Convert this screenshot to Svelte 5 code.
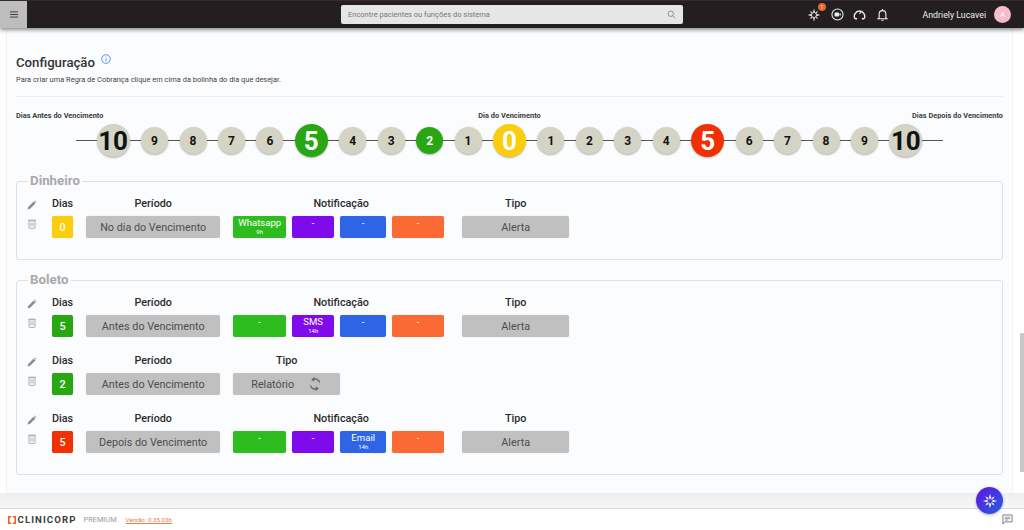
<script>
	const before = [10, 9, 8, 7, 6, 5, 4, 3, 2, 1];
	const after = [1, 2, 3, 4, 5, 6, 7, 8, 9, 10];
	const ball = (n, tone) => ({
		n,
		big: n === 10 || n === 5 || n === 0,
		tone
	});
	const days = [
		...before.map((n) => ball(n, n === 5 || n === 2 ? "green" : "plain")),
		ball(0, "yellow"),
		...after.map((n) => ball(n, n === 5 ? "red" : "plain"))
	];

	const notif = (wa, sms, email, other) => [
		{ cls: "wa", label: wa ? "Whatsapp" : "-", hour: wa },
		{ cls: "sms", label: sms ? "SMS" : "-", hour: sms },
		{ cls: "mail", label: email ? "Email" : "-", hour: email },
		{ cls: "other", label: "-", hour: other }
	];

	const groups = [
		{
			name: "Dinheiro",
			rules: [{ day: 0, tone: "yellow", period: "No dia do Vencimento", items: notif("9h") }]
		},
		{
			name: "Boleto",
			rules: [
				{ day: 5, tone: "green", period: "Antes do Vencimento", items: notif("", "14h") },
				{ day: 2, tone: "green", period: "Antes do Vencimento", report: true },
				{ day: 5, tone: "red", period: "Depois do Vencimento", items: notif("", "", "14h") }
			]
		}
	];
</script>

{#snippet spark(size, color)}
	<svg width={size} height={size} viewBox="0 0 24 24" fill={color}>
		<path d="M12 1l1.6 6.2L12 9.6l-1.6-2.4zM12 23l-1.6-6.2 1.6-2.4 1.6 2.4zM1 12l6.2-1.6L9.6 12l-2.4 1.6zM23 12l-6.2 1.6-2.4-1.6 2.4-1.6z" />
		<path d="M5 5l4.5 2.2.6 2.9-2.9-.6zM19 19l-4.5-2.2-.6-2.9 2.9.6z" opacity="0.85" />
		<path d="M19 5l-2.2 4.5-2.9.6.6-2.9zM5 19l2.2-4.5 2.9-.6-.6 2.9z" opacity="0.85" />
	</svg>
{/snippet}

<div class="page">
	<header class="topbar">
		<button class="menu" aria-label="Menu">
			<svg width="8" height="7" viewBox="0 0 8 7" fill="#444">
				<rect y="0.4" width="8" height="1" />
				<rect y="3" width="8" height="1" />
				<rect y="5.6" width="8" height="1" />
			</svg>
		</button>
		<div class="search">
			<span>Encontre pacientes ou funções do sistema</span>
			<svg width="9" height="9" viewBox="0 0 12 12" fill="none" stroke="#8a8a8a" stroke-width="1.3">
				<circle cx="5" cy="5" r="3.6" />
				<path d="M7.7 7.7L11 11" />
			</svg>
		</div>
		<div class="actions">
			<div class="spark">
				{@render spark(14, "#fff")}
				<span class="badge">1</span>
			</div>
			<svg width="13" height="13" viewBox="0 0 14 14" fill="none" stroke="#eee" stroke-width="1.1">
				<circle cx="7" cy="7" r="6" />
				<rect x="3.8" y="4.8" width="5" height="4.4" rx="1" fill="#eee" stroke="none" />
				<path d="M8.6 7l2-1.4v2.8z" fill="#eee" stroke="none" />
			</svg>
			<svg width="13" height="13" viewBox="0 0 14 14" fill="none" stroke="#eee" stroke-width="1.5">
				<path d="M2 11.4a5.6 5.6 0 1 1 10 0" />
				<path d="M2 11.6h2.4M9.6 11.6H12" />
				<path d="M7 6.4l1.8-2.4" stroke-width="1.2" />
			</svg>
			<svg width="13" height="14" viewBox="0 0 14 15" fill="none" stroke="#eee" stroke-width="1.2">
				<path d="M3.4 10.6V6.4a3.6 3.6 0 0 1 7.2 0v4.2l1.2 1H2.2z" />
				<path d="M5.8 13.2h2.4M7 1v1" />
			</svg>
		</div>
		<span class="user">Andriely Lucavei</span>
		<span class="avatar">A</span>
	</header>

	<main class="card">
		<h1>Configuração
			<svg width="10" height="10" viewBox="0 0 10 10" fill="none" stroke="#4a8fd6" stroke-width="0.9">
				<circle cx="5" cy="5" r="4.3" />
				<path d="M5 4.4v2.8M5 2.6v.9" />
			</svg>
		</h1>
		<p class="hint">Para criar uma Regra de Cobrança clique em cima da bolinha do dia que desejar.</p>

		<div class="legend">
			<span>Dias Antes do Vencimento</span>
			<span>Dia do Vencimento</span>
			<span>Dias Depois do Vencimento</span>
		</div>

		<div class="track">
			{#each days as d}
				<span class="ball {d.tone}" class:big={d.big}>{d.n}</span>
			{/each}
		</div>

		{#each groups as g}
			<fieldset>
				<legend>{g.name}</legend>
				{#each g.rules as r}
					<div class="rule">
						<div class="tools">
							<svg width="10" height="10" viewBox="0 0 10 10" fill="#8d8d8d">
								<path d="M0.6 9.4l.6-2.5L6.6 1.5l1.9 1.9-5.4 5.4zM7.2.9l.6-.5 1.8 1.8-.5.6z" />
							</svg>
							<svg width="8" height="10" viewBox="0 0 8 10" fill="none" stroke="#9a9a9a" stroke-width="0.8">
								<rect x="1" y="1.8" width="6" height="7.6" rx="0.6" />
								<path d="M0 1.2h8M3 3.5v4M5 3.5v4" />
							</svg>
						</div>
						<div class="col">
							<strong>Dias</strong>
							<span class="chip day {r.tone}">{r.day}</span>
						</div>
						<div class="col">
							<strong>Período</strong>
							<span class="chip period">{r.period}</span>
						</div>
						{#if r.report}
							<div class="col">
								<strong>Tipo</strong>
								<span class="chip type report">
									Relatório
									<svg width="14" height="14" viewBox="0 0 14 14" fill="none" stroke="#666" stroke-width="1.3">
										<path d="M11.6 5.6a4.8 4.8 0 0 0-6.8-3.3" />
										<path d="M2.4 8.4a4.8 4.8 0 0 0 6.8 3.3" />
										<path d="M6.6 0L3.2 2.4l3 2.4zM7.4 14l3.4-2.4-3-2.4z" fill="#666" stroke="none" />
									</svg>
								</span>
							</div>
						{:else}
							<div class="col">
								<strong class="notif-title">Notificação</strong>
								<div class="notifs">
									{#each r.items as item}
										<span class="chip notif {item.cls}">
											{item.label}
											<small>{item.hour || ""}</small>
										</span>
									{/each}
								</div>
							</div>
							<div class="col tipo">
								<strong>Tipo</strong>
								<span class="chip type">Alerta</span>
							</div>
						{/if}
					</div>
				{/each}
			</fieldset>
		{/each}
	</main>

	<div class="strip"></div>

	<footer>
		<span class="brand">
			<svg width="8" height="8" viewBox="0 0 10 10" fill="none" stroke="#e8622c" stroke-width="2">
				<path d="M4 1H1v8h3M6 1h3v8H6" />
			</svg>
			CLINICORP
		</span>
		<span class="plan">PREMIUM</span>
		<a href="#versao">Versão: 0.35.03b</a>
		<svg class="chat" width="11" height="11" viewBox="0 0 12 12" fill="none" stroke="#666" stroke-width="0.9">
			<path d="M1 1h10v7.6H3L1 11z" />
			<path d="M3 3.4h6M3 5h6M3 6.6h4" stroke-width="0.7" />
		</svg>
	</footer>

	<button class="fab" aria-label="Assistente">{@render spark(16, "#fff")}</button>
	<div class="scroll"></div>
</div>

<style>
	:global(body) {
		margin: 0;
		background: #fff;
	}

	.page {
		position: relative;
		display: flex;
		flex-direction: column;
		height: 530px;
		overflow: hidden;
		font-family: Roboto, sans-serif;
		color: #2b2b2b;
	}

	.topbar {
		position: relative;
		z-index: 2;
		display: flex;
		align-items: center;
		flex: none;
		height: 28px;
		background: #231f20;
		border-top: 1px solid #3a2a30;
		box-sizing: border-box;
		box-shadow: 0 2px 4px rgba(0, 0, 0, 0.45);
		white-space: nowrap;
	}

	.menu {
		display: flex;
		flex: none;
		align-items: center;
		justify-content: center;
		width: 27px;
		height: 27px;
		padding: 0;
		border: none;
		background: #bdbdbd;
	}

	.search {
		display: flex;
		flex: none;
		align-items: center;
		justify-content: space-between;
		box-sizing: border-box;
		width: 342px;
		height: 19px;
		margin-left: 314px;
		padding: 0 7px;
		border-radius: 2px;
		background: #e6e6e6;
		font-size: 7.5px;
		color: #777;
	}

	.actions {
		display: flex;
		flex: none;
		align-items: center;
		gap: 9.5px;
		margin-left: 124px;
	}

	.spark {
		position: relative;
		display: flex;
	}

	.badge {
		position: absolute;
		top: -5px;
		right: -5px;
		width: 8px;
		height: 8px;
		border-radius: 50%;
		background: #e8622c;
		color: #fff;
		font-size: 5px;
		line-height: 8px;
		text-align: center;
	}

	.user {
		margin-left: 34px;
		font-size: 8.8px;
		color: #eee;
	}

	.avatar {
		display: flex;
		flex: none;
		align-items: center;
		justify-content: center;
		width: 17px;
		height: 17px;
		margin-left: 8px;
		border-radius: 50%;
		background: #f7bccb;
		color: #fff;
		font-size: 8px;
	}

	.card {
		flex: none;
		box-sizing: border-box;
		width: 1005px;
		height: 465px;
		margin-left: 7px;
		padding: 26px 9px 0;
		background: #fbfcfe;
		box-shadow: 0 1px 1px rgba(0, 0, 0, 0.3);
	}

	h1 {
		display: flex;
		align-items: flex-start;
		gap: 6px;
		margin: 0;
		font-size: 13.2px;
		line-height: 17px;
		font-weight: 500;
		color: #333;
	}

	.hint {
		margin: 4px 0 0;
		padding-bottom: 11px;
		border-bottom: 1px solid #ececec;
		font-size: 7.45px;
		line-height: 10px;
		color: #444;
	}

	.legend {
		display: grid;
		grid-template-columns: 1fr auto 1fr;
		margin-top: 14px;
		font-size: 7.4px;
		line-height: 10px;
		font-weight: 700;
		color: #3d3d3d;
	}

	.legend span:last-child {
		text-align: right;
	}

	.track {
		position: relative;
		display: flex;
		align-items: center;
		justify-content: center;
		gap: 11.45px;
		height: 33px;
		margin-top: 3px;
	}

	.track::before {
		content: "";
		position: absolute;
		left: 60px;
		right: 60px;
		top: 16px;
		height: 1px;
		background: #555;
	}

	.ball {
		position: relative;
		display: flex;
		align-items: center;
		justify-content: center;
		width: 27px;
		height: 27px;
		border-radius: 50%;
		background: #d4d4c4;
		box-shadow: 0 1px 2px rgba(0, 0, 0, 0.3);
		font-size: 12px;
		font-weight: 700;
		color: #111;
	}

	.ball.big {
		width: 33px;
		height: 33px;
		font-size: 26px;
	}

	.ball.green {
		background: #29a712;
		color: #fff;
	}

	.ball.yellow {
		background: #fbcd0a;
		color: #fff;
	}

	.ball.red {
		background: #f23006;
		color: #fff;
	}

	fieldset {
		min-width: 0;
		margin: 0 0 13px;
		padding: 9px 10px 4px;
		border: 1px solid #dfe1e5;
		border-radius: 3px;
	}

	fieldset:first-of-type {
		margin-top: 17px;
		height: 86px;
		box-sizing: border-box;
	}

	legend {
		margin-left: 1px;
		padding: 0 2px;
		font-size: 13.3px;
		line-height: 14px;
		font-weight: 700;
		color: #a9a9a9;
	}

	.rule {
		display: flex;
		margin-bottom: 17px;
	}

	.tools {
		display: flex;
		flex-direction: column;
		align-items: center;
		gap: 9px;
		width: 10px;
		margin-right: 15px;
		padding-top: 3px;
	}

	.col {
		display: flex;
		flex-direction: column;
		align-items: center;
		gap: 6px;
		margin-right: 13px;
	}

	.col.tipo {
		margin-left: 5px;
	}

	strong {
		font-size: 10.8px;
		line-height: 13px;
		font-weight: 500;
		color: #2b2b2b;
	}

	.notif-title {
		padding-left: 5px;
	}

	.chip {
		display: flex;
		flex-direction: column;
		align-items: center;
		justify-content: center;
		box-sizing: border-box;
		height: 22px;
		border-radius: 2px;
		box-shadow: 0 0 1px rgba(0, 0, 0, 0.2);
	}

	.day {
		width: 21px;
		font-size: 10.8px;
		font-weight: 500;
		color: #fff;
	}

	.day.yellow {
		background: #fbcd0a;
	}

	.day.green {
		background: #29a712;
	}

	.day.red {
		background: #f23006;
	}

	.period {
		width: 134px;
		background: #c0c0c0;
		font-size: 10.8px;
		color: #4d4d4d;
	}

	.type {
		width: 107px;
		background: #c0c0c0;
		font-size: 10.8px;
		color: #4d4d4d;
	}

	.type.report {
		flex-direction: row;
		gap: 14px;
	}

	.notifs {
		display: flex;
		gap: 6px;
	}

	.notif {
		font-size: 9.6px;
		line-height: 10px;
		color: #fff;
	}

	.notif small {
		height: 8px;
		font-size: 6px;
		line-height: 8px;
	}

	.wa {
		width: 53px;
		background: #2ebd1e;
	}

	.sms {
		width: 42px;
		background: #7f0bec;
	}

	.mail {
		width: 46px;
		background: #2e64e6;
	}

	.other {
		width: 52px;
		background: #fb6a35;
	}

	.strip {
		flex: none;
		height: 16px;
		background: linear-gradient(#efefef, #f6f6f6);
		border-bottom: 1px solid #dcdcdc;
		box-sizing: border-box;
	}

	footer {
		flex: 1;
		display: flex;
		align-items: center;
		padding: 0 8px;
		background: #fff;
		font-size: 7.4px;
	}

	.brand {
		display: flex;
		align-items: center;
		gap: 1.5px;
		font-size: 9.6px;
		font-weight: 700;
		letter-spacing: 1.1px;
		color: #3b3b3b;
	}

	.plan {
		margin-left: 7px;
		color: #999;
	}

	a {
		margin-left: 9px;
		font-size: 6.2px;
		color: #ee7a45;
	}

	.chat {
		margin-left: auto;
		margin-right: 3px;
	}

	.fab {
		position: absolute;
		left: 976px;
		top: 487px;
		display: flex;
		align-items: center;
		justify-content: center;
		width: 27px;
		height: 27px;
		padding: 0;
		border: none;
		border-radius: 50%;
		background: linear-gradient(135deg, #6312e2, #2460e0);
		box-shadow: 0 1px 3px rgba(0, 0, 0, 0.3);
	}

	.scroll {
		position: absolute;
		right: 0;
		top: 333px;
		width: 4px;
		height: 139px;
		background: #c8c8c8;
	}
</style>
